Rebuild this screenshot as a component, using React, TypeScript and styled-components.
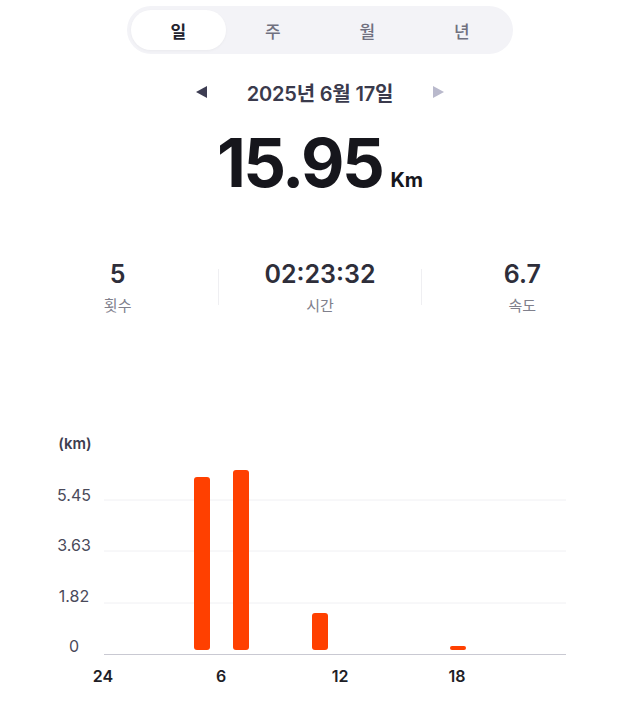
import React, { useState } from 'react';
import styled, { createGlobalStyle } from 'styled-components';

const GlobalStyle = createGlobalStyle`
  body {
    margin: 0;
    background: #ffffff;
    font-family: Inter, "Noto Sans CJK KR", sans-serif;
    -webkit-font-smoothing: antialiased;
  }
`;

const Page = styled.div`
  width: 640px;
  height: 728px;
  padding-top: 6px;
  box-sizing: border-box;
  display: flex;
  flex-direction: column;
  align-items: center;
  overflow: hidden;
`;

const Segmented = styled.div`
  width: 386px;
  height: 48px;
  padding: 4px;
  box-sizing: border-box;
  border-radius: 24px;
  background: #f3f3f7;
  display: flex;
`;

const Segment = styled.button<{ active: boolean }>`
  flex: 1;
  border: none;
  border-radius: 20px;
  background: ${(props) => (props.active ? '#ffffff' : 'transparent')};
  box-shadow: ${(props) =>
    props.active ? '0px 1px 3px rgba(0, 0, 0, 0.04)' : 'none'};
  color: ${(props) => (props.active ? '#23232e' : '#70707f')};
  font-family: "Noto Sans CJK KR", sans-serif;
  font-size: 17px;
  font-weight: ${(props) => (props.active ? 600 : 500)};
  cursor: pointer;
`;

const DateRow = styled.div`
  margin-top: 24px;
  height: 28px;
  display: flex;
  align-items: center;
  gap: 40px;
`;

const Arrow = styled.div<{ disabled?: boolean }>`
  width: 0;
  height: 0;
  border-top: 6px solid transparent;
  border-bottom: 6px solid transparent;
  ${(props) =>
    props.disabled
      ? 'border-left: 11px solid #b9b9cc;'
      : 'border-right: 11px solid #3d3d52;'}
`;

const DateText = styled.div`
  font-size: 20px;
  font-weight: 600;
  color: #3a3a4c;
  letter-spacing: -0.2px;
`;

const TotalRow = styled.div`
  margin-top: 23px;
  display: flex;
  align-items: baseline;
  gap: 8px;
`;

const TotalValue = styled.div`
  font-size: 67px;
  font-weight: 700;
  color: #16161c;
  letter-spacing: -2.5px;
  line-height: 1;
`;

const TotalUnit = styled.div`
  font-size: 20px;
  font-weight: 700;
  color: #16161c;
`;

const Stats = styled.div`
  margin-top: 63px;
  width: 606px;
  display: grid;
  grid-template-columns: 1fr 1px 1fr 1px 1fr;
  align-items: center;
`;

const Stat = styled.div`
  display: flex;
  flex-direction: column;
  align-items: center;
  gap: 6px;
`;

const StatValue = styled.div`
  font-size: 25px;
  font-weight: 600;
  color: #2e2e3a;
  line-height: 30px;
`;

const StatLabel = styled.div`
  font-family: "Noto Sans CJK KR", sans-serif;
  font-size: 15px;
  color: #80808c;
  line-height: 20px;
`;

const Divider = styled.div`
  width: 1px;
  height: 36px;
  background: #efeff2;
`;

const ChartWrap = styled.div`
  margin-top: 115px;
  width: 640px;
  height: 280px;
`;

const tabs = ['일', '주', '월', '년'];

const stats = [
  { value: '5', label: '횟수' },
  { value: '02:23:32', label: '시간' },
  { value: '6.7', label: '속도' },
];

// chart coordinates (svg space)
const TOP = 430;
const gridLines = [500, 551, 603];
const yTicks = [
  { label: '5.45', y: 501 },
  { label: '3.63', y: 551 },
  { label: '1.82', y: 602 },
  { label: '0', y: 652 },
];
const xTicks = [
  { label: '24', x: 103 },
  { label: '6', x: 221 },
  { label: '12', x: 340 },
  { label: '18', x: 457 },
];
const bars = [
  { x: 194, top: 477 },
  { x: 233, top: 470 },
  { x: 312, top: 613 },
  { x: 450, top: 646 },
];

function Chart() {
  return (
    <ChartWrap>
      <svg width="640" height="280" viewBox={`0 ${TOP} 640 280`}>
        <text
          x={75}
          y={449}
          textAnchor="middle"
          fontSize="15"
          fontWeight="600"
          fill="#3d3d4f"
          fontFamily="Inter, sans-serif"
        >
          (km)
        </text>
        {gridLines.map((y) => (
          <line key={y} x1={104} x2={566} y1={y} y2={y} stroke="#f0f0f3" />
        ))}
        <line x1={104} x2={566} y1={654.5} y2={654.5} stroke="#c9c9d2" />
        {yTicks.map((t) => (
          <text
            key={t.label}
            x={74}
            y={t.y}
            textAnchor="middle"
            fontSize="16"
            fill="#4a4a5a"
            fontFamily="Inter, sans-serif"
          >
            {t.label}
          </text>
        ))}
        {bars.map((b) => (
          <rect
            key={b.x}
            x={b.x}
            y={b.top}
            width={16}
            height={650 - b.top}
            rx={b.top > 640 ? 2 : 3}
            fill="#ff4000"
          />
        ))}
        {xTicks.map((t) => (
          <text
            key={t.label}
            x={t.x}
            y={682}
            textAnchor="middle"
            fontSize="16"
            fontWeight="600"
            fill="#1e1e26"
            fontFamily="Inter, sans-serif"
          >
            {t.label}
          </text>
        ))}
      </svg>
    </ChartWrap>
  );
}

export default function App() {
  const [active, setActive] = useState(0);
  return (
    <Page>
      <GlobalStyle />
      <Segmented>
        {tabs.map((t, i) => (
          <Segment
            key={t}
            active={i === active}
            onClick={() => setActive(i)}
            type="button"
          >
            {t}
          </Segment>
        ))}
      </Segmented>
      <DateRow>
        <Arrow />
        <DateText>2025년 6월 17일</DateText>
        <Arrow disabled />
      </DateRow>
      <TotalRow>
        <TotalValue>15.95</TotalValue>
        <TotalUnit>Km</TotalUnit>
      </TotalRow>
      <Stats>
        {stats.map((s, i) => (
          <React.Fragment key={s.label}>
            {i > 0 && <Divider />}
            <Stat>
              <StatValue>{s.value}</StatValue>
              <StatLabel>{s.label}</StatLabel>
            </Stat>
          </React.Fragment>
        ))}
      </Stats>
      <Chart />
    </Page>
  );
}
